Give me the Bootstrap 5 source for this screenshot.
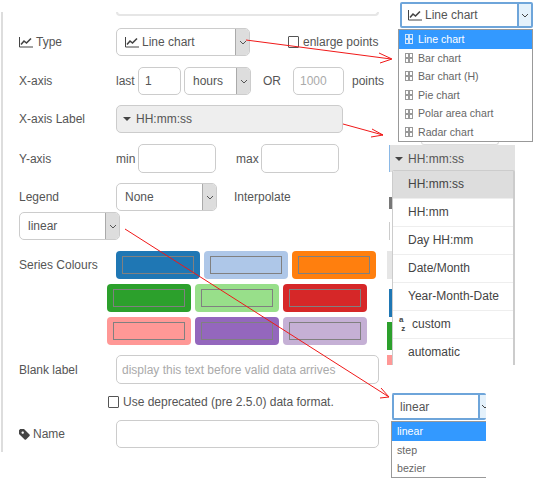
<!DOCTYPE html>
<html lang="en">
<head>
  <meta charset="UTF-8">
  <meta name="viewport" content="width=device-width, initial-scale=1.0">
  <title>Chart node settings</title>
  <link href="https://cdn.jsdelivr.net/npm/bootstrap@5.3.0/dist/css/bootstrap.min.css" rel="stylesheet">
  <style>
    body { width: 535px; height: 480px; overflow: hidden; position: relative; background: #fff; color: #555; font: 12px/18px "Liberation Sans", Arial, sans-serif; }
    .form-pane { margin: 15px 0 0 1px; height: 440px; border-left: 2px solid #ddd; padding-left: 16px; }
    .top-stub { width: 263px; height: 4px; margin: -3px 0 0 97px; border: 2px solid #e6e6e6; border-top: 0; border-radius: 0 0 5px 5px; }
    .fld-row { height: 28px; display: flex; align-items: center; }
    .fld-label { width: 97px; flex: none; }
    .fld-input { height: 28px; border: 1px solid #ccc; border-radius: 5px; background: #fff; padding: 0 6px; font: inherit; color: #555; }
    .fld-input::placeholder { color: #aaa; }
    .sel-box { height: 28px; display: flex; border: 1px solid #ccc; border-radius: 5px; background: #fff; overflow: hidden; flex: none; }
    .sel-text { flex: 1; display: flex; align-items: center; gap: 3px; padding-left: 8px; white-space: nowrap; }
    .sel-arrow { width: 14px; background: #ddd; border-left: 1px solid #aaa; display: flex; align-items: center; justify-content: center; flex: none; }
    .sw-row { display: flex; gap: 4px; margin-left: 88px; }
    .sw-item { width: 84px; height: 28px; border-radius: 4px; padding: 5px 6px; }
    .sw-item span { display: block; height: 100%; border: 1.5px solid #808080; }
    .chk-box { width: 11px; height: 12px; border: 1px solid #555; border-radius: 1px; background: #fff; flex: none; }
    .caret-down { width: 0; height: 0; border: 4px solid transparent; border-top: 4px solid #444; border-bottom: 0; flex: none; }
    .pop-sel { position: absolute; display: flex; background: #fff; border: 2px solid #6ea5da; border-radius: 2px; }
    .pop-sel .sel-text { padding-left: 6px; }
    .pop-arrow { background: #e4f1fb; border-left: 2px solid #6ea5da; display: flex; align-items: center; justify-content: center; }
    .pop-list { position: absolute; background: #fff; border: 1px solid #999; font: 10.6px/18.6px "Liberation Sans", sans-serif; color: #666; overflow: hidden; }
    .pop-item { height: 18.6px; display: flex; align-items: center; gap: 5px; padding-left: 6px; white-space: nowrap; }
    .pop-item.active-opt { background: #3399ff; color: #fff; }
    .tofu { width: 8px; height: 10px; background-color: #999; flex: none;
      background-image: linear-gradient(#fff 0 0), linear-gradient(#fff 0 0), linear-gradient(#fff 0 0), linear-gradient(#fff 0 0);
      background-size: 2px 3px; background-position: 1px 1px, 5px 1px, 1px 6px, 5px 6px; background-repeat: no-repeat; }
    .active-opt .tofu { background-color: #cfe4fb;
      background-image: linear-gradient(#3399ff 0 0), linear-gradient(#3399ff 0 0), linear-gradient(#3399ff 0 0), linear-gradient(#3399ff 0 0); }
    .time-btn { position: absolute; left: 389px; top: 145px; width: 126px; height: 27px; background: #e2e2e2; border-left: 1px solid #8ab8e6; display: flex; align-items: center; gap: 5px; padding-left: 5px; color: #555; }
    .time-menu { position: absolute; left: 392px; top: 170px; width: 123px; height: 195px; background: #fff; border: 1px solid #ccc; border-right-width: 2px; border-bottom: 0; border-radius: 2px 2px 0 0; overflow: hidden; }
    .time-menu .list-group-item { height: 28px; padding: 0 0 2px 15px; display: flex; align-items: center; gap: 3px; border-color: #eee; color: #444; font-size: 12px; }
    .time-menu .list-group-item.sel-time { background: #ddd; }
    .az-sym { font-size: 8px; line-height: 9px; font-weight: bold; margin-left: -9px; width: 10px; white-space: pre; }
    .frag { position: absolute; }
    .arrow-layer { position: absolute; left: 0; top: 0; pointer-events: none; }
  </style>
</head>
<body>
  <div class="form-pane">
    <div class="top-stub"></div>

    <div class="fld-row" style="margin-top:12px">
      <div class="fld-label d-flex align-items-center" style="gap:3px">
        <svg width="14" height="12" viewBox="0 0 14 12"><path d="M0.500 1v10H14" fill="none" stroke="#444"/><path d="M2 8.500 5 5l2.500 2L12 2.500" fill="none" stroke="#444" stroke-width="1.600"/></svg>Type
      </div>
      <div class="sel-box" style="width:134px">
        <div class="sel-text">
          <svg width="14" height="12" viewBox="0 0 14 12"><path d="M0.500 1v10H14" fill="none" stroke="#444"/><path d="M2 8.500 5 5l2.500 2L12 2.500" fill="none" stroke="#444" stroke-width="1.600"/></svg>Line chart
        </div>
        <div class="sel-arrow"><svg width="8" height="5" viewBox="0 0 8 5"><path d="M1 1l3 3 3-3" fill="none" stroke="#555"/></svg></div>
      </div>
      <div class="chk-box" style="margin-left:38px"></div>
      <span style="margin-left:4px">enlarge points</span>
    </div>

    <div class="fld-row" style="margin-top:11px">
      <div class="fld-label">X-axis</div>
      <span style="width:22px">last</span>
      <input class="fld-input" style="width:43px" value="1">
      <div class="sel-box" style="width:67px;margin-left:3px">
        <div class="sel-text">hours</div>
        <div class="sel-arrow"><svg width="8" height="5" viewBox="0 0 8 5"><path d="M1 1l3 3 3-3" fill="none" stroke="#555"/></svg></div>
      </div>
      <span style="margin-left:12px;width:30px">OR</span>
      <input class="fld-input" style="width:51px" placeholder="1000">
      <span style="margin-left:8px">points</span>
    </div>

    <div class="fld-row" style="margin-top:10px">
      <div class="fld-label">X-axis Label</div>
      <div class="sel-box" style="width:227px;background:#eee">
        <div class="sel-text" style="gap:5px;padding-left:6px"><span class="caret-down"></span>HH:mm:ss</div>
      </div>
    </div>

    <div class="fld-row" style="margin-top:11px;height:29px">
      <div class="fld-label">Y-axis</div>
      <span style="width:22px">min</span>
      <input class="fld-input" style="width:78px;height:29px">
      <span style="margin-left:20px;width:25px">max</span>
      <input class="fld-input" style="width:78px;height:29px">
    </div>

    <div class="fld-row" style="margin-top:10px">
      <div class="fld-label">Legend</div>
      <div class="sel-box" style="width:101px">
        <div class="sel-text">None</div>
        <div class="sel-arrow"><svg width="8" height="5" viewBox="0 0 8 5"><path d="M1 1l3 3 3-3" fill="none" stroke="#555"/></svg></div>
      </div>
      <span style="margin-left:17px">Interpolate</span>
    </div>

    <div class="fld-row" style="margin-top:1px">
      <div class="sel-box" style="width:101px">
        <div class="sel-text">linear</div>
        <div class="sel-arrow"><svg width="8" height="5" viewBox="0 0 8 5"><path d="M1 1l3 3 3-3" fill="none" stroke="#555"/></svg></div>
      </div>
    </div>

    <div class="fld-row" style="margin-top:11px">
      <div class="fld-label">Series Colours</div>
      <div class="d-flex gap-1">
        <div class="sw-item" style="background:#1f77b4"><span></span></div>
        <div class="sw-item" style="background:#aec7e8"><span></span></div>
        <div class="sw-item" style="background:#ff7f0e"><span></span></div>
      </div>
    </div>
    <div class="sw-row" style="margin-top:5px">
      <div class="sw-item" style="background:#2ca02c"><span></span></div>
      <div class="sw-item" style="background:#98df8a"><span></span></div>
      <div class="sw-item" style="background:#d62728"><span></span></div>
    </div>
    <div class="sw-row" style="margin-top:5px">
      <div class="sw-item" style="background:#ff9896"><span></span></div>
      <div class="sw-item" style="background:#9467bd"><span></span></div>
      <div class="sw-item" style="background:#c5b0d5"><span></span></div>
    </div>

    <div class="fld-row" style="margin-top:10px;height:29px">
      <div class="fld-label">Blank label</div>
      <input class="fld-input" style="width:263px;height:29px;padding-left:5px" placeholder="display this text before valid data arrives">
    </div>

    <div class="fld-row" style="margin-top:10px;height:16px;padding-left:89px">
      <div class="chk-box"></div>
      <span style="margin-left:4px;white-space:nowrap">Use deprecated (pre 2.5.0) data format.</span>
    </div>

    <div class="fld-row" style="margin-top:10px">
      <div class="fld-label d-flex align-items-center" style="gap:3px">
        <svg width="11" height="11" viewBox="0 0 11 11"><path d="M0 1.200 1.200 0H5l5.500 5.500a1 1 0 0 1 0 1.400L7 10.500a1 1 0 0 1-1.400 0L0 5zM2.500 3.700a1.200 1.200 0 1 0 0-.1z" fill="#444" fill-rule="evenodd"/></svg>Name
      </div>
      <input class="fld-input" style="width:263px">
    </div>
  </div>

  <!-- bits of the form that show behind the pasted popups -->
  <div class="frag" style="left:421px;top:140px;width:78px;height:5px;border:1px solid #ddd;border-top:0;border-radius:0 0 3px 3px"></div>
  <div class="frag" style="left:389px;top:197px;width:3px;height:12px;background:#777"></div>
  <div class="frag" style="left:389px;top:222px;width:3px;height:18px;border-left:1px solid #ccc"></div>
  <div class="frag" style="left:387px;top:251px;width:5px;height:28px;background:#e6e6e6"></div>
  <div class="frag" style="left:389px;top:289px;width:3px;height:28px;background:#1f77b4"></div>
  <div class="frag" style="left:387px;top:322px;width:5px;height:28px;background:#2ca02c"></div>
  <div class="frag" style="left:387px;top:355px;width:5px;height:10px;background:#ff9896"></div>

  <!-- type popup -->
  <div class="pop-sel" style="left:400px;top:2px;width:133px;height:26px">
    <div class="sel-text">
      <svg width="14" height="12" viewBox="0 0 14 12"><path d="M0.500 1v10H14" fill="none" stroke="#444"/><path d="M2 8.500 5 5l2.500 2L12 2.500" fill="none" stroke="#444" stroke-width="1.600"/></svg>Line chart
    </div>
    <div class="pop-arrow" style="width:14px"><svg width="8" height="5" viewBox="0 0 8 5"><path d="M1 1l3 3 3-3" fill="none" stroke="#444"/></svg></div>
  </div>
  <div class="pop-list" style="left:398px;top:29px;width:135px;height:113px">
    <div class="pop-item active-opt"><span class="tofu"></span>Line chart</div>
    <div class="pop-item"><span class="tofu"></span>Bar chart</div>
    <div class="pop-item"><span class="tofu"></span>Bar chart (H)</div>
    <div class="pop-item"><span class="tofu"></span>Pie chart</div>
    <div class="pop-item"><span class="tofu"></span>Polar area chart</div>
    <div class="pop-item"><span class="tofu"></span>Radar chart</div>
  </div>

  <!-- time format popup -->
  <div class="time-btn"><span class="caret-down"></span>HH:mm:ss</div>
  <div class="time-menu">
    <div class="list-group list-group-flush">
      <div class="list-group-item sel-time">HH:mm:ss</div>
      <div class="list-group-item">HH:mm</div>
      <div class="list-group-item">Day HH:mm</div>
      <div class="list-group-item">Date/Month</div>
      <div class="list-group-item">Year-Month-Date</div>
      <div class="list-group-item"><span class="az-sym">a<br> z</span>custom</div>
      <div class="list-group-item">automatic</div>
    </div>
  </div>

  <!-- interpolate popup -->
  <div class="pop-sel" style="left:392px;top:393px;width:94px;height:27px;overflow:hidden;border-right:0">
    <div class="sel-text" style="flex:none;width:84px">linear</div>
    <div class="pop-arrow" style="flex:1;justify-content:flex-start;padding-left:1px"><svg width="8" height="5" viewBox="0 0 8 5"><path d="M1 1l3 3 3-3" fill="none" stroke="#444"/></svg></div>
  </div>
  <div class="pop-list" style="left:391px;top:421px;width:95px;height:57px;border-right:0">
    <div class="pop-item active-opt" style="padding-left:5px">linear</div>
    <div class="pop-item" style="padding-left:5px">step</div>
    <div class="pop-item" style="padding-left:5px">bezier</div>
  </div>

  <svg class="arrow-layer" width="535" height="480" viewBox="0 0 535 480" fill="none" stroke="#f01818" stroke-width="1">
    <path d="M246 40 391 59M379 53 392 59 380 63"/>
    <path d="M343 124 383 135M372 129 383 135 371 137"/>
    <path d="M125 229 389 397M381 388 389 397 380 398"/>
  </svg>
</body>
</html>
